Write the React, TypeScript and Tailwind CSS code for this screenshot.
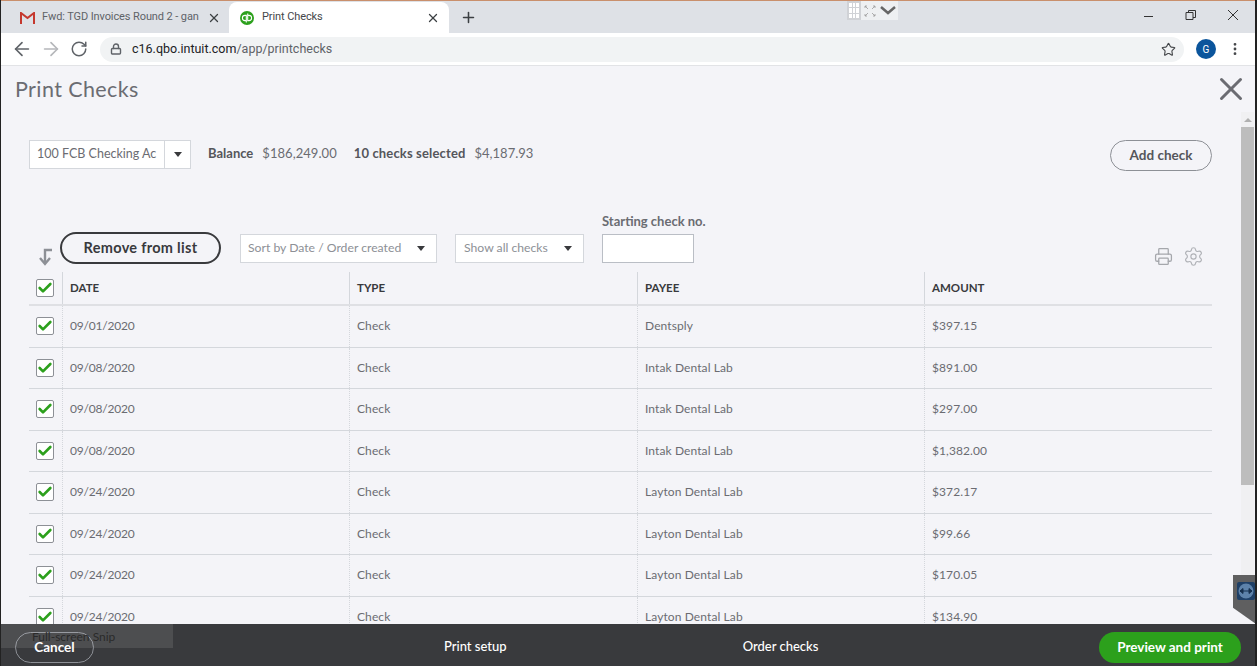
import { ArrowLeft, ArrowRight, Check, Lock, MoreVertical, Plus, RotateCw, Settings, Star, X, Printer } from "lucide-react";

const FONT = "font-['Lato',sans-serif]";

const rows = [
  { date: "09/01/2020", payee: "Dentsply", amount: "$397.15" },
  { date: "09/08/2020", payee: "Intak Dental Lab", amount: "$891.00" },
  { date: "09/08/2020", payee: "Intak Dental Lab", amount: "$297.00" },
  { date: "09/08/2020", payee: "Intak Dental Lab", amount: "$1,382.00" },
  { date: "09/24/2020", payee: "Layton Dental Lab", amount: "$372.17" },
  { date: "09/24/2020", payee: "Layton Dental Lab", amount: "$99.66" },
  { date: "09/24/2020", payee: "Layton Dental Lab", amount: "$170.05" },
  { date: "09/24/2020", payee: "Layton Dental Lab", amount: "$134.90" },
];

const GRID = "grid grid-cols-[33px_287px_288px_287px_288px]";

const Caret = () => <span className="w-0 h-0 border-x-[4px] border-x-transparent border-t-[5px] border-t-[#393a3d]" />;

const Checkbox = () => (
  <span className="w-[18px] h-[18px] bg-white border border-[#8d9096] rounded-[2px] flex items-center justify-center">
    <Check size={16} strokeWidth={4} className="text-[#2ca01c]" />
  </span>
);

const Cell = ({ children, head }: { children: React.ReactNode; head?: boolean }) => (
  <div className={`pl-[7px] flex items-center border-l border-[#d4d7dc] ${head ? "" : "border-dotted"}`}>{children}</div>
);

const BrowserChrome = () => (
  <div className="font-['Roboto',sans-serif]">
    <div className="h-[33px] bg-[#dee1e6] border-t border-[#c98f6c] flex items-end relative">
      <div className="w-[228px] h-[31px] pl-[19px] pr-[8px] flex items-center text-[11px] tracking-[-0.1px] text-[#5f6368]">
        <svg width="15" height="12" viewBox="0 0 15 12" className="shrink-0">
          <path d="M1 12V1l6.5 5L14 1v11" fill="none" stroke="#c5382e" strokeWidth="2" />
        </svg>
        <span className="ml-[7px] w-[162px] overflow-hidden whitespace-nowrap">Fwd: TGD Invoices Round 2 - gan</span>
        <X size={14} strokeWidth={2.2} className="ml-auto text-[#3c4043]" />
      </div>
      <div className="w-[220px] h-[31px] bg-white rounded-t-[8px] pl-[11px] pr-[9px] flex items-center text-[11px] tracking-[-0.1px] text-[#45474a]">
        <svg width="14" height="14" viewBox="0 0 14 14" className="shrink-0" fill="none">
          <circle cx="7" cy="7" r="7" fill="#2ca01c" />
          <path d="M6 9.6H5a2.6 2.6 0 0 1 0-5.2h1.3v7.2M8 4.4h1a2.6 2.6 0 0 1 0 5.2H7.7V2.4" stroke="#fff" strokeWidth="1.1" />
        </svg>
        <span className="ml-[8px]">Print Checks</span>
        <X size={14} strokeWidth={2.2} className="ml-auto text-[#3c4043]" />
      </div>
      <Plus size={17} strokeWidth={2.2} className="ml-[11px] mb-[7px] text-[#3c4043]" />
      <div className="ml-auto flex items-center h-[27px] pr-[13px] text-[#444] self-start">
        <svg width="100" height="12" viewBox="0 0 100 12" fill="none" stroke="#333" strokeWidth="1">
          <path d="M0 7.5h9" />
          <path d="M42 3.5h7v7h-7zM44.5 3.5V1.5h7v7h-2.5" />
          <path d="M84 1l10 10M94 1L84 11" />
        </svg>
      </div>
      {/* snip toolbar hanging from the top of the screen */}
      <div className="absolute left-[846px] top-0 w-[51px] h-[19px] bg-[#eef0f2] flex items-center">
        <div className="w-[14px] h-full bg-[#d0d2d6] grid grid-cols-3 gap-[1px] p-[2px]">
          {Array.from({ length: 9 }).map((_, i) => (
            <span key={i} className="bg-white" />
          ))}
        </div>
        <svg width="12" height="12" viewBox="0 0 12 12" className="ml-[3px]" fill="none" stroke="#999" strokeWidth="0.8">
          <path d="M1 3V1h2M9 1h2v2M1 9v2h2M11 9v2H9M1 1l3 3M11 1L8 4M1 11l3-3M11 11L8 8" />
        </svg>
        <svg width="16" height="9" viewBox="0 0 16 9" className="ml-[4px]" fill="none" stroke="#666" strokeWidth="2.5">
          <path d="M1 1l7 6 7-6" />
        </svg>
      </div>
    </div>
    <div className="h-[33px] bg-white border-b border-[#e2e3e6] flex items-center text-[#5f6368]">
      <ArrowLeft size={22} strokeWidth={1.8} className="ml-[10px] shrink-0" />
      <ArrowRight size={22} strokeWidth={1.8} className="ml-[7px] shrink-0 text-[#b5b7ba]" />
      <RotateCw size={18} strokeWidth={2} className="ml-[8px] shrink-0" />
      <div className="ml-[12px] w-[1084px] h-[25px] shrink-0 bg-[#f1f3f4] rounded-full flex items-center pl-[10px] text-[12.5px]">
        <Lock size={12} strokeWidth={2.8} className="text-[#5f6368]" />
        <span className="ml-[10px] text-[#202124]">c16.qbo.intuit.com</span>
        <span className="text-[#5f6368]">/app/printchecks</span>
        <Star size={15} strokeWidth={1.8} className="ml-auto mr-[8px] text-[#45474a]" />
      </div>
      <span className="ml-[12px] shrink-0 w-[20px] h-[20px] rounded-full bg-[#0b559c] text-white text-[10px] flex items-center justify-center">G</span>
      <MoreVertical size={16} strokeWidth={2.2} className="ml-[11px] shrink-0 text-[#45474a]" />
    </div>
  </div>
);

const Table = () => (
  <div className="mt-[9px] text-[12px] text-[#6b6c72] tracking-[0.1px]">
    <div className={`${GRID} h-[34px] border-b-2 border-[#dfe0e4] font-bold text-[#393a3d] text-[11.5px] tracking-normal`}>
      <div className="flex items-center justify-center pr-[1px]"><Checkbox /></div>
      <Cell head>DATE</Cell>
      <Cell head>TYPE</Cell>
      <Cell head>PAYEE</Cell>
      <Cell head>AMOUNT</Cell>
    </div>
    {rows.map((row, i) => (
      <div key={i} className={`${GRID} h-[41.5px] border-b border-[#d4d7dc]`}>
        <div className="flex items-center justify-center pr-[1px]"><Checkbox /></div>
        <Cell><span className="tracking-[-0.2px]">{row.date}</span></Cell>
        <Cell>Check</Cell>
        <Cell>{row.payee}</Cell>
        <Cell>{row.amount}</Cell>
      </div>
    ))}
  </div>
);

const Main = () => (
  <div className={`flex-1 min-h-0 bg-[#f4f4f8] overflow-hidden ${FONT}`}>
    <div className="h-[46px] flex items-center justify-between pl-[14px] pr-[7px]">
      <h1 className="text-[21.5px] font-normal text-[#6b6c72] tracking-[0.4px]">Print Checks</h1>
      <X size={38} strokeWidth={1.9} className="text-[#6b6c72]" />
    </div>
    <div className="flex h-[513px]">
      <div className="w-[1183px] ml-[28px] overflow-hidden">
        <div className="mt-[28px] flex items-start">
          <div className="w-[162px] h-[29px] bg-white border border-[#d4d7dc] flex items-center text-[12.5px] text-[#6b6c72]">
            <span className="w-[134px] pl-[7px] whitespace-nowrap overflow-hidden">100 FCB Checking Ac</span>
            <span className="flex-1 h-full border-l border-[#d4d7dc] flex items-center justify-center"><Caret /></span>
          </div>
          <div className="ml-[17px] h-[27px] flex items-center text-[13px] text-[#6b6c72]">
            <b className="font-bold text-[#55565b]">Balance</b>
            <span className="ml-[9px] tracking-[0.05px]">$186,249.00</span>
            <b className="ml-[17px] font-bold text-[#55565b] tracking-[0.15px]">10 checks selected</b>
            <span className="ml-[9px]">$4,187.93</span>
          </div>
          <button className="ml-auto w-[102px] h-[31px] rounded-full border border-[#8d9096] text-[13.5px] font-bold text-[#55565b]">Add check</button>
        </div>
        <div className="mt-[33px] h-[59px] flex items-end">
          <svg width="16" height="18" viewBox="0 0 16 18" className="ml-[9px] mb-[-3px]" fill="none" stroke="#8d9096" strokeWidth="2.4">
            <path d="M14 2H7v14M2 10l5 6 5-6" />
          </svg>
          <button className="ml-[6px] mb-[-1px] w-[161px] h-[32px] rounded-full border-2 border-[#393a3d] text-[14.5px] font-bold text-[#393a3d] tracking-[0.3px]">Remove from list</button>
          <div className="ml-[19px] w-[197px] h-[29px] bg-white border border-[#d4d7dc] pl-[7px] pr-[11px] flex items-center justify-between text-[12.2px] text-[#8d9096]">
            Sort by Date / Order created <Caret />
          </div>
          <div className="ml-[18px] w-[129px] h-[29px] bg-white border border-[#d4d7dc] pl-[8px] pr-[11px] flex items-center justify-between text-[12.2px] text-[#8d9096]">
            Show all checks <Caret />
          </div>
          <div className="ml-[18px]">
            <div className="text-[13px] font-bold text-[#6b6c72] mb-[3px]">Starting check no.</div>
            <div className="w-[92px] h-[29px] bg-white border border-[#babec5]" />
          </div>
          <Printer size={19} strokeWidth={1.6} className="ml-auto mb-[-3px] text-[#a5a7ac]" />
          <Settings size={21} strokeWidth={1.3} className="ml-[10px] mr-[8px] mb-[-4px] text-[#b0b2b7]" />
        </div>
        <Table />
      </div>
      {/* scrollbar */}
      <div className="ml-[29px] w-[13px] h-[463px] bg-[#f0f0f2] flex flex-col items-center">
        <span className="mt-[6px] w-0 h-0 border-x-[4px] border-x-transparent border-b-[4px] border-b-[#b0b0b0]" />
        <span className="mt-[5px] w-full h-[358px] bg-[#bdbdbd]" />
      </div>
    </div>
  </div>
);

const BottomBar = () => (
  <div className={`h-[42px] bg-[#393a3d] flex items-center pt-[4px] text-white text-[13px] relative ${FONT}`}>
    <button className="ml-[14px] w-[79px] h-[31px] rounded-full border border-[#8d9096] font-bold text-[13.5px]">Cancel</button>
    <span className="ml-[350px] font-medium">Print setup</span>
    <span className="ml-[236px] font-medium">Order checks</span>
    <button className="ml-auto mr-[16px] w-[142px] h-[31px] rounded-full bg-[#2ca01c] font-bold text-[13.5px]">Preview and print</button>
    {/* windows snip tooltip bleeding through */}
    <div className="absolute left-0 top-0 w-[172px] h-[24px] bg-white/10 pl-[31px] text-[12px] leading-[26px] text-[#2a2a2a]">Full-screen Snip</div>
  </div>
);

export default function App() {
  return (
    <div className="w-[1257px] h-[666px] overflow-hidden flex flex-col relative border-l border-[#222]">
      <BrowserChrome />
      <Main />
      <BottomBar />
      {/* teamviewer side tab */}
      <div className="absolute left-[1232px] top-[575px] w-[23px] h-[49px] bg-[#5f5f60] [clip-path:polygon(0_0,100%_0,100%_100%,0_67%)] pl-[4px] pt-[7px]">
        <svg width="18" height="18" viewBox="0 0 18 18">
          <rect width="18" height="18" rx="2" fill="#1e3f66" />
          <circle cx="9" cy="9" r="7.5" fill="#5d82aa" />
          <path d="M3 9h12M3 9l3-2.5v5zM15 9l-3-2.5v5z" fill="#16304f" stroke="#16304f" strokeWidth="1" />
        </svg>
      </div>
      <div className="absolute right-0 top-0 w-[2px] h-full bg-[#222]" />
    </div>
  );
}
